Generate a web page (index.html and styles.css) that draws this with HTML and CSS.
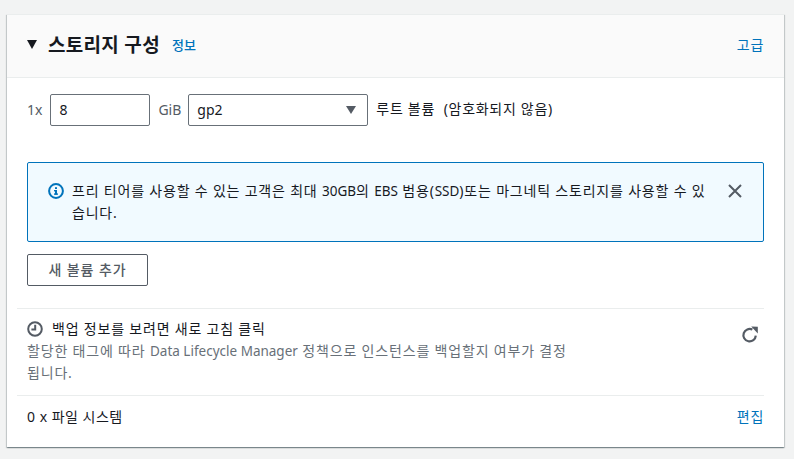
FILE: index.html
```html
<!DOCTYPE html>
<html lang="ko">
<head>
<meta charset="utf-8">
<title>스토리지 구성</title>
<link rel="stylesheet" href="styles.css">
</head>
<body>
<section class="card">
  <header class="card-head">
    <div class="head-left">
      <span class="caret"></span>
      <h2 class="title">스토리지 구성</h2>
      <a class="info-link">정보</a>
    </div>
    <a class="link">고급</a>
  </header>
  <div class="card-body">
    <div class="volume-row">
      <span class="label">1x</span>
      <div class="field size-field">8</div>
      <span class="label">GiB</span>
      <div class="field type-field"><span>gp2</span><span class="select-caret"></span></div>
      <span class="volume-note">루트 볼륨&nbsp; (암호화되지 않음)</span>
    </div>
    <div class="alert">
      <svg class="alert-icon" viewBox="0 0 16 16" width="16" height="16"><circle cx="8" cy="8" r="6.9" fill="none" stroke="#0073bb" stroke-width="2"/><rect x="7" y="7" width="2" height="4.6" fill="#0073bb"/><rect x="6" y="7" width="2" height="1.4" fill="#0073bb"/><rect x="6" y="10.4" width="4" height="1.4" fill="#0073bb"/><rect x="7" y="4.2" width="2" height="1.8" fill="#0073bb"/></svg>
      <p class="alert-text">프리 티어를 사용할 수 있는 고객은 최대 <span class="en">30GB</span>의 <span class="en">EBS</span> 범용(<span class="en">SSD</span>)또는 마그네틱 스토리지를 사용할 수 있습니다.</p>
      <svg class="alert-close" viewBox="0 0 14 14" width="14" height="14"><path d="M1 1l12 12M13 1L1 13" fill="none" stroke="#545b64" stroke-width="2"/></svg>
    </div>
    <button class="add-btn" type="button">새 볼륨 추가</button>
    <div class="backup">
      <div class="backup-text">
        <div class="backup-title">
          <svg viewBox="0 0 16 16" width="16" height="16"><circle cx="8" cy="8" r="6.8" fill="none" stroke="#545b64" stroke-width="2"/><path d="M8.2 3.8v4.8H4.4" fill="none" stroke="#545b64" stroke-width="2"/></svg>
          <span>백업 정보를 보려면 새로 고침 클릭</span>
        </div>
        <p class="backup-desc">할당한 태그에 따라 <span class="en">Data Lifecycle Manager</span> 정책으로 인스턴스를 백업할지 여부가 결정됩니다.</p>
      </div>
      <svg class="refresh" viewBox="0 0 18 18" width="18" height="18"><path d="M14.8 9.6A6.2 6.2 0 1 1 11.4 3.6" fill="none" stroke="#545b64" stroke-width="2.2"/><path d="M10.2 0.6l6.6 0.2v6.6z" fill="#545b64"/></svg>
    </div>
    <div class="fs-row">
      <span>0 x 파일 시스템</span>
      <a class="link">편집</a>
    </div>
  </div>
</section>
</body>
</html>
```
FILE: styles.css
```css
* { box-sizing: border-box; }
html, body { height: 100%; }
body {
  margin: 0;
  padding: 14px 10px 12px 7px;
  background: #f2f3f3;
  font-family: "Noto Sans", "Noto Sans CJK KR", sans-serif;
  font-size: 14px;
  letter-spacing: .5px;
  line-height: 22px;
  color: #16191f;
  overflow: hidden;
}
.en { font-size: 13.5px; letter-spacing: 0; }
.card {
  width: 777px;
  height: 433px;
  background: #fff;
  border-top: 1px solid #eaeded;
  box-shadow: 0 1px 1px 0 rgba(0, 28, 36, .3), 1px 1px 1px 0 rgba(0, 28, 36, .15), -1px 1px 1px 0 rgba(0, 28, 36, .15);
}
.card-head {
  height: 63px;
  padding: 0 20px 3px;
  display: flex;
  align-items: center;
  justify-content: space-between;
  background: #fafafa;
  border-bottom: 1px solid #eaeded;
}
.head-left { display: flex; align-items: center; }
.caret {
  width: 0;
  height: 0;
  border-left: 5.5px solid transparent;
  border-right: 5.5px solid transparent;
  border-top: 9px solid #16191f;
  margin-right: 11px;
}
.title {
  margin: 0;
  font-size: 19px;
  font-weight: 700;
  line-height: 24px;
  letter-spacing: .3px;
}
.info-link {
  margin-left: 12px;
  font-size: 13px;
  font-weight: 500;
  letter-spacing: 0;
  color: #0073bb;
}
.link { color: #0073bb; letter-spacing: .7px; }
.card-body { padding: 16px 20px 0; }
.volume-row { display: flex; align-items: center; height: 32px; }
.label { color: #545b64; letter-spacing: 0; }
.field {
  height: 32px;
  border: 1px solid #687078;
  border-radius: 2px;
  padding: 0 8px;
  display: flex;
  align-items: center;
  letter-spacing: 0;
}
.size-field { width: 100px; margin: 0 8px; }
.type-field { width: 180px; margin: 0 8px 0 7px; justify-content: space-between; padding-right: 11px; }
.select-caret {
  width: 0;
  height: 0;
  border-left: 5.5px solid transparent;
  border-right: 5.5px solid transparent;
  border-top: 8px solid #545b64;
}
.volume-note { margin-top: -3px; letter-spacing: .7px; }
.alert {
  margin-top: 36px;
  height: 80px;
  background: #f1faff;
  border: 1px solid #0073bb;
  border-radius: 2px;
  padding: 10px 21px 0 20px;
  display: flex;
  align-items: flex-start;
}
.alert-icon { flex: none; margin: 10px 8px 0 0; }
.alert-text { margin: 0; width: 640px; line-height: 22px; padding-top: 7px; letter-spacing: .8px; }
.alert-close { flex: none; margin: 11px 0 0 auto; }
.add-btn {
  display: block;
  margin-top: 12px;
  width: 121px;
  height: 32px;
  padding: 0;
  background: #fff;
  border: 1px solid #545b64;
  border-radius: 2px;
  font: 500 14px/20px "Noto Sans", "Noto Sans CJK KR", sans-serif;
  letter-spacing: .9px;
  color: #545b64;
}
.backup {
  margin: 22px 0 0 -10px;
  padding: 9px 5px 11px 10px;
  width: 747px;
  height: 88px;
  display: flex;
  justify-content: space-between;
  border-top: 1px solid #eaeded;
  border-bottom: 1px solid #eaeded;
}
.backup-text { width: 545px; }
.backup-title { display: flex; align-items: center; gap: 9px; height: 22px; letter-spacing: .8px; color: #16191f; }
.backup-desc { margin: 0; color: #687078; letter-spacing: .82px; }
.refresh { margin: 8px 0 0; }
.fs-row {
  display: flex;
  justify-content: space-between;
  align-items: center;
  height: 41px;
}
```
